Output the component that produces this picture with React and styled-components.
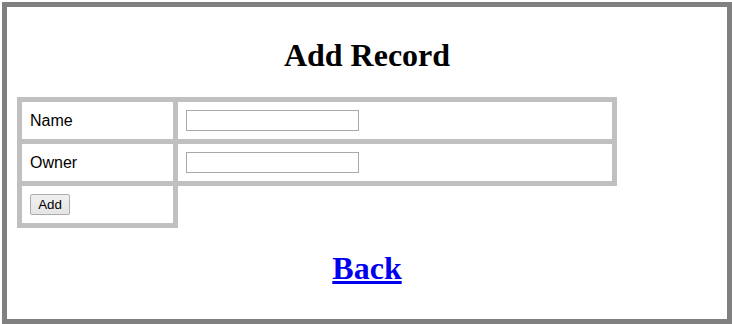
import styled, { createGlobalStyle } from "styled-components";

const Global = createGlobalStyle`
  body {
    margin: 2px 0 0 2px;
    background: #fff;
    font-family: "Liberation Sans", Arial, sans-serif;
  }
`;

const Frame = styled.div`
  box-sizing: border-box;
  width: 730px;
  border: 5px solid #808080;
  padding: 0 10px 11px;
  display: flex;
  flex-direction: column;
`;

const Heading = styled.h1`
  margin: ${(p) => p.$margin};
  font-family: "Liberation Serif", "Times New Roman", serif;
  font-size: 32px;
  font-weight: bold;
  line-height: 37px;
  text-align: center;
  color: #000;
`;

const BackLink = styled.a`
  color: #0000ee;
  text-decoration: underline;
`;

const Form = styled.table`
  border-collapse: collapse;
  width: 600px;
`;

const Cell = styled.td`
  border: 5px solid #c0c0c0;
  padding: 8px;
  width: ${(p) => p.$width}px;
  font-size: 16px;
  color: #000;
  vertical-align: middle;
  height: 21px;
`;

const TextInput = styled.input`
  box-sizing: border-box;
  display: block;
  width: 173px;
  height: 21px;
  margin: 0;
  padding: 1px 2px;
  border: 1px solid #a9a9a9;
  font-family: "Liberation Sans", Arial, sans-serif;
  font-size: 13.33px;
`;

const Button = styled.button`
  box-sizing: border-box;
  display: block;
  width: 40px;
  height: 21px;
  margin: 0;
  padding: 0 6px;
  border: 1px solid #acacac;
  border-radius: 2px;
  background: linear-gradient(#f0f0f0, #e5e5e5);
  font-family: "Liberation Sans", Arial, sans-serif;
  font-size: 13.33px;
  color: #000;
`;

export default function App() {
  return (
    <>
      <Global />
      <Frame>
        <Heading $margin="30px 0 23px">Add Record</Heading>
        <Form>
          <tbody>
            <tr>
              <Cell $width={135}>Name</Cell>
              <Cell $width={418}>
                <TextInput type="text" />
              </Cell>
            </tr>
            <tr>
              <Cell $width={135}>Owner</Cell>
              <Cell $width={418}>
                <TextInput type="text" />
              </Cell>
            </tr>
            <tr>
              <Cell $width={135}>
                <Button>Add</Button>
              </Cell>
            </tr>
          </tbody>
        </Form>
        <Heading $margin="22px 0 21px">
          <BackLink href="#">Back</BackLink>
        </Heading>
      </Frame>
    </>
  );
}
